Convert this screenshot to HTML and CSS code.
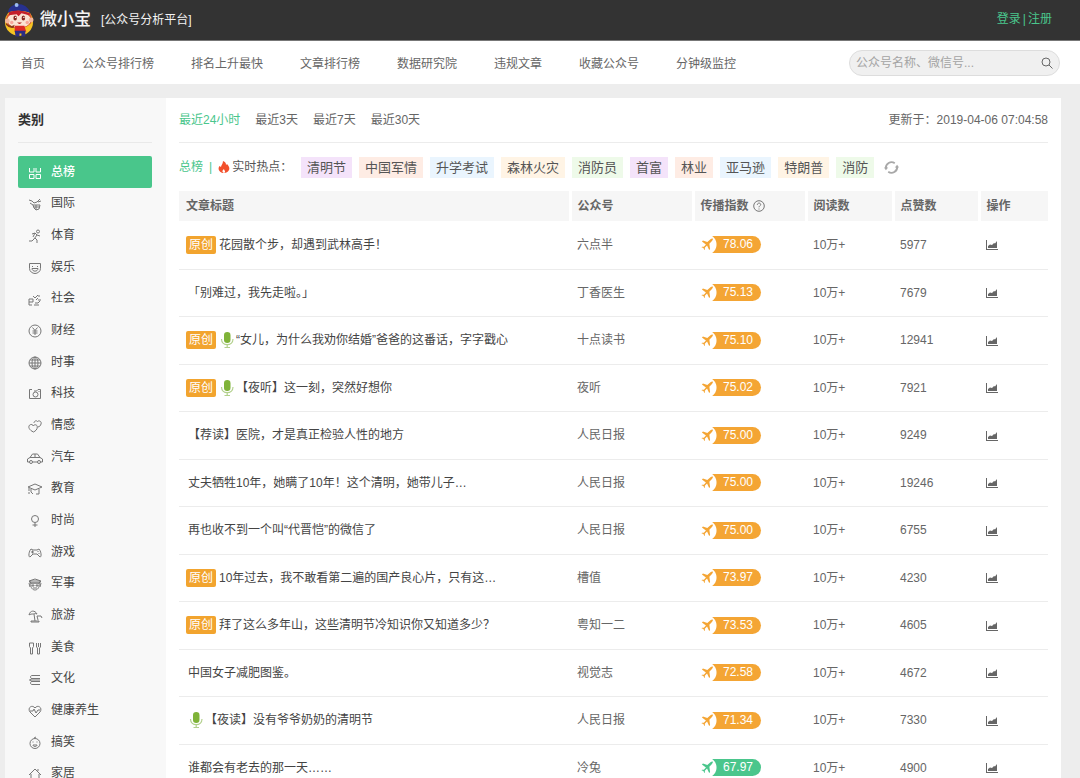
FILE: index.html
```html
<!DOCTYPE html>
<html lang="zh-CN">
<head>
<meta charset="utf-8">
<title>微小宝 公众号分析平台</title>
<link rel="stylesheet" href="styles.css">
</head>
<body>
<svg class="sprite" aria-hidden="true">
  <symbol id="i-all" viewBox="0 0 16 16"><path d="M2.500 3v4h4.500V3M9 3v4h4.500V3M2.500 9.500h4.500V13.500H2.500zM9 9.500h4.500V13.500H9z"/></symbol>
  <symbol id="i-world" viewBox="0 0 16 16"><path d="M2 4l3 1 2 2 3-1 3-3M3 7l3 2M11 6l3-1M6 9h7l-1 4-3 1-2-2zM9 9v5M7 11h6"/></symbol>
  <symbol id="i-sport" viewBox="0 0 16 16"><circle cx="11" cy="3.500" r="1.500"/><path d="M5 6l3-1 2 2-3 4-2 2H2M10 7l3 1M8 10l2 2v3M8 5l-2 4"/></symbol>
  <symbol id="i-fun" viewBox="0 0 16 16"><path d="M2.500 3.500h11v5c0 3-3 5-5.500 5s-5.500-2-5.500-5zM5 6.500h1M10 6.500h1"/><path class="solid" d="M5 8.500h6c0 3.500-6 3.500-6 0z"/></symbol>
  <symbol id="i-social" viewBox="0 0 16 16"><path d="M2 8h4v3H2zM2 11v3h3M6 5l2 2 3-3M11 7l-2 2M8 12h3l2-2M12 4v2M7 14h5M11 9h3"/></symbol>
  <symbol id="i-money" viewBox="0 0 16 16"><circle cx="8" cy="8" r="6"/><path d="M5.500 4.500L8 7.500l2.500-3M5.500 8h5M5.500 10h5M8 7.500V12"/></symbol>
  <symbol id="i-globe" viewBox="0 0 16 16"><circle cx="8" cy="8" r="6"/><ellipse cx="8" cy="8" rx="3" ry="6"/><path d="M2 8h12M8 2v12M3 5h10M3 11h10"/></symbol>
  <symbol id="i-cam" viewBox="0 0 16 16"><path d="M5 3.500H2.500v9h11v-9H11L9.500 5H7"/><circle cx="8.500" cy="8.500" r="2.500"/><path d="M12 5v1"/></symbol>
  <symbol id="i-heart" viewBox="0 0 16 16"><path d="M6.500 14C2 12 1 9 2.500 7.200 4 5.800 6 6.500 6.300 8c1-2 4-1.500 4 1C10.300 11.500 8.500 13 6.500 14zM7 5c0-2 2.500-3 3.500-1.500C12 2 15 3.500 14 6c-.5 2-1.500 2.500-3 3"/></symbol>
  <symbol id="i-car" viewBox="0 0 16 16"><path d="M2.500 12H.5V9l2.500-1.500L5.500 4h5L13 7.500 15.500 9v3h-2M5.500 12h5M3 7.500h10M8 4v3.500"/><circle cx="4" cy="12" r="1.500"/><circle cx="12" cy="12" r="1.500"/></symbol>
  <symbol id="i-edu" viewBox="0 0 16 16"><path d="M1 6l7-3 7 3-7 3zM4 8v3M12 8v5H9M4 11l2 2M2 7v3M1 12h2"/></symbol>
  <symbol id="i-style" viewBox="0 0 16 16"><circle cx="8" cy="6" r="3.500"/><path d="M8 9.500V14M5.500 12h5"/></symbol>
  <symbol id="i-game" viewBox="0 0 16 16"><path d="M4 4l2 1h4l2-1c2 2 3 8 1 8l-3-3H6l-3 3C1 12 2 6 4 4zM4 7h3M5.500 5.500v3M11 6v1M12 8v1"/></symbol>
  <symbol id="i-army" viewBox="0 0 16 16"><path d="M2 5l6-2 6 2-2 2H4zM4 7c-1 5 2 7 4 7s5-2 4-7M2 7l1 4M14 7l-1 4M6 12h4"/><path class="solid" d="M3 5h10v2H3zM5 9h2v1H5zM9 9h2v1H9z"/></symbol>
  <symbol id="i-trip" viewBox="0 0 16 16"><path d="M2 7c1-5 6-5 8-1-2-1-3 0-4 0S3 6 2 7zM7 6l1 7M10 8h4l1 2M10 8l1 4"/><path class="solid" d="M4 13h8v1H4z"/></symbol>
  <symbol id="i-food" viewBox="0 0 16 16"><path d="M2.500 3h4v3.500L5.500 8v6h-2V8l-1-1.500zM9.500 3v4l1 1v6h2V8l1-1V3M11.500 3v4"/></symbol>
  <symbol id="i-book" viewBox="0 0 16 16"><path d="M13 4.500H5c-2 0-2 3 0 3h8M5 7.500c-2 0-2 3 0 3h8M5 10.500c-2 0-2 3 0 3h8M2 9h11"/></symbol>
  <symbol id="i-health" viewBox="0 0 16 16"><path d="M8 14L3 9C0 5 5 1 8 5c3-4 8 0 5 4zM3 8h3l1-2 2 4 2-3h2"/></symbol>
  <symbol id="i-laugh" viewBox="0 0 16 16"><circle cx="8" cy="8.500" r="5"/><path d="M5.500 7h1M9.500 7h1M6 10h4c0 2-4 2-4 0zM7 3l2-1"/></symbol>
  <symbol id="i-home" viewBox="0 0 16 16"><path d="M2 9l6-6 6 6M4 8v6h8V8M11 5V3"/></symbol>
  <symbol id="plane" viewBox="0 0 14 14"><path d="M1 3.700l1.100-.9 4.700 1.400 3.400-2.900c1.200-.9 2.300-.8 2.500-.5.300.4 0 1.400-.9 2.400L9 6.300l.8 5.500-1 1-2.300-4.600-2.400 2.200.1 2-.6.600-1-2.100-2.100-1 .6-.6 2 .1 2.200-2.400z"/></symbol>
  <symbol id="chart" viewBox="0 0 12 11"><path d="M0 1h1v9h11v1H0z"/><path d="M2 9V7l2-1.500 2 .5 2-2 1 .5L11 2v7z"/></symbol>
  <symbol id="mic" viewBox="0 0 14 18"><rect x="4" y="1" width="6.500" height="11" rx="3.200" fill="#7fb338"/><path d="M1.500 8c0 7.500 11.500 7.500 11.500 0M7.200 14v2.500M4.500 16.500h5.500" fill="none" stroke="#b2d08c" stroke-width="1.200"/></symbol>
</svg>

<header class="topbar">
  <a class="brand" href="#">
    <svg class="mascot" viewBox="0 0 32 36" aria-hidden="true">
      <circle cx="15.500" cy="20" r="14.500" fill="#f6c322"/>
      <path d="M4 12Q1 16 3 22q5 5 12 4 8 1 13-5 2-5-1-10z" fill="#d9582f"/>
      <ellipse cx="15.500" cy="18" rx="12" ry="8" fill="#fbe3d3"/>
      <circle cx="3.500" cy="19" r="2.500" fill="#f3b59b"/><circle cx="28" cy="18" r="2.500" fill="#f3b59b"/>
      <path d="M4 10Q5 3 14 1.500q10 0 13 9-11-4-23-.5z" fill="#27318f"/>
      <path d="M5 10q10-4 22 1l-1 2-8-2-3 3-2-2-8 1z" fill="#c51f2b"/>
      <circle cx="13" cy="2.500" r="2" fill="#9cbcf0"/>
      <ellipse cx="11.500" cy="16" rx="1.800" ry="2.600" fill="#8b2820"/><ellipse cx="20" cy="16" rx="1.800" ry="2.600" fill="#8b2820"/>
      <circle cx="12" cy="15.300" r=".7" fill="#fff"/><circle cx="20.500" cy="15.300" r=".7" fill="#fff"/>
      <circle cx="8" cy="20.500" r="1.800" fill="#f7a79b"/><circle cx="24" cy="20.500" r="1.800" fill="#f7a79b"/>
      <path d="M13.500 20.500h5q-2.500 3-5 0z" fill="#b01d1d"/>
      <path d="M2 21q5 5 9 2l-1 3Q5 27 2 23z" fill="#8a3a16"/>
      <path d="M11 24h10l2 6H11z" fill="#dc2a25"/>
      <path d="M11 29h11v6h-4v-3h-2v3h-4z" fill="#2b2d83"/>
    </svg>
    <span class="brand-name">微小宝</span>
    <span class="brand-sub">[公众号分析平台]</span>
  </a>
  <div class="account"><a href="#">登录</a><span>|</span><a href="#">注册</a></div>
</header>

<nav class="mainnav">
  <div class="links">
    <a href="#">首页</a><a href="#">公众号排行榜</a><a href="#">排名上升最快</a><a href="#">文章排行榜</a><a href="#">数据研究院</a><a href="#">违规文章</a><a href="#">收藏公众号</a><a href="#">分钟级监控</a>
  </div>
  <form class="search">
    <input type="text" placeholder="公众号名称、微信号..." aria-label="搜索公众号">
    <button type="button" aria-label="搜索"><svg viewBox="0 0 12 12"><circle cx="5" cy="5" r="4"/><path d="M8 8l3.500 3.500"/></svg></button>
  </form>
</nav>

<div class="page">
  <aside class="sidebar">
    <h2>类别</h2>
    <div class="cats">
      <a class="active" href="#"><svg><use href="#i-all"/></svg>总榜</a>
      <a href="#"><svg><use href="#i-world"/></svg>国际</a>
      <a href="#"><svg><use href="#i-sport"/></svg>体育</a>
      <a href="#"><svg><use href="#i-fun"/></svg>娱乐</a>
      <a href="#"><svg><use href="#i-social"/></svg>社会</a>
      <a href="#"><svg><use href="#i-money"/></svg>财经</a>
      <a href="#"><svg><use href="#i-globe"/></svg>时事</a>
      <a href="#"><svg><use href="#i-cam"/></svg>科技</a>
      <a href="#"><svg><use href="#i-heart"/></svg>情感</a>
      <a href="#"><svg><use href="#i-car"/></svg>汽车</a>
      <a href="#"><svg><use href="#i-edu"/></svg>教育</a>
      <a href="#"><svg><use href="#i-style"/></svg>时尚</a>
      <a href="#"><svg><use href="#i-game"/></svg>游戏</a>
      <a href="#"><svg><use href="#i-army"/></svg>军事</a>
      <a href="#"><svg><use href="#i-trip"/></svg>旅游</a>
      <a href="#"><svg><use href="#i-food"/></svg>美食</a>
      <a href="#"><svg><use href="#i-book"/></svg>文化</a>
      <a href="#"><svg><use href="#i-health"/></svg>健康养生</a>
      <a href="#"><svg><use href="#i-laugh"/></svg>搞笑</a>
      <a href="#"><svg><use href="#i-home"/></svg>家居</a>
    </div>
  </aside>

  <main class="content">
    <div class="periods">
      <a class="on" href="#">最近24小时</a><a href="#">最近3天</a><a href="#">最近7天</a><a href="#">最近30天</a>
      <span class="updated">更新于：2019-04-06 07:04:58</span>
    </div>
    <div class="hot">
      <div class="hot-label">
        <span class="green">总榜</span><span class="green bar">|</span>
        <svg class="flame" viewBox="0 0 12 12"><path d="M5 0c3 1 3 3 3 4l1-1c5 5 1 9-3 9S-1 8 1.500 5L3 6c0-2 2-3 2-6z" fill="#f2502c"/><path d="M6 12c-2.500-1-1.500-3 0-4 0 1.500 2.500 2.500 0 4z" fill="#fff"/></svg>
        <span>实时热点：</span>
      </div>
      <a class="tag violet" href="#">清明节</a><a class="tag pink" href="#">中国军情</a><a class="tag blue" href="#">升学考试</a><a class="tag cream" href="#">森林火灾</a><a class="tag lime" href="#">消防员</a><a class="tag violet" href="#">首富</a><a class="tag pink" href="#">林业</a><a class="tag blue" href="#">亚马逊</a><a class="tag cream" href="#">特朗普</a><a class="tag lime" href="#">消防</a>
      <button class="refresh" type="button" aria-label="刷新"><svg viewBox="0 0 16 16"><path d="M2 9a6 6 0 0 1 9.500-5.500M14 7a6 6 0 0 1-9.500 5.500"/><path class="tip" d="M0 8l2 3L4.500 8zM16 8l-2-3-2.500 3z"/></svg></button>
    </div>

    <table class="rank">
      <colgroup><col><col class="c-name"><col class="c-index"><col class="c-read"><col class="c-like"><col class="c-op"></colgroup>
      <thead>
        <tr><th>文章标题</th><th>公众号</th><th><span class="with-help">传播指数<svg viewBox="0 0 12 12"><circle cx="6" cy="6" r="5.300"/><path d="M4.300 4.800C4.300 2.500 7.800 2.600 7.700 4.700 7.600 5.800 6 5.900 6 7.300M6 8.500v1"/></svg></span></th><th>阅读数</th><th>点赞数</th><th>操作</th></tr>
      </thead>
      <tbody>
        <tr><td><a class="title" href="#"><b>原创</b>花园散个步，却遇到武林高手！</a></td><td>六点半</td><td><span class="score"><svg><use href="#plane"/></svg><i>78.06</i></span></td><td>10万+</td><td>5977</td><td><a class="op" href="#" aria-label="趋势"><svg><use href="#chart"/></svg></a></td></tr>
        <tr><td><a class="title" href="#">「别难过，我先走啦。」</a></td><td>丁香医生</td><td><span class="score"><svg><use href="#plane"/></svg><i>75.13</i></span></td><td>10万+</td><td>7679</td><td><a class="op" href="#" aria-label="趋势"><svg><use href="#chart"/></svg></a></td></tr>
        <tr><td><a class="title" href="#"><b>原创</b><svg class="mic"><use href="#mic"/></svg>“女儿，为什么我劝你结婚”爸爸的这番话，字字戳心</a></td><td>十点读书</td><td><span class="score"><svg><use href="#plane"/></svg><i>75.10</i></span></td><td>10万+</td><td>12941</td><td><a class="op" href="#" aria-label="趋势"><svg><use href="#chart"/></svg></a></td></tr>
        <tr><td><a class="title" href="#"><b>原创</b><svg class="mic"><use href="#mic"/></svg>【夜听】这一刻，突然好想你</a></td><td>夜听</td><td><span class="score"><svg><use href="#plane"/></svg><i>75.02</i></span></td><td>10万+</td><td>7921</td><td><a class="op" href="#" aria-label="趋势"><svg><use href="#chart"/></svg></a></td></tr>
        <tr><td><a class="title" href="#">【荐读】医院，才是真正检验人性的地方</a></td><td>人民日报</td><td><span class="score"><svg><use href="#plane"/></svg><i>75.00</i></span></td><td>10万+</td><td>9249</td><td><a class="op" href="#" aria-label="趋势"><svg><use href="#chart"/></svg></a></td></tr>
        <tr><td><a class="title" href="#">丈夫牺牲10年，她瞒了10年！这个清明，她带儿子…</a></td><td>人民日报</td><td><span class="score"><svg><use href="#plane"/></svg><i>75.00</i></span></td><td>10万+</td><td>19246</td><td><a class="op" href="#" aria-label="趋势"><svg><use href="#chart"/></svg></a></td></tr>
        <tr><td><a class="title" href="#">再也收不到一个叫“代晋恺”的微信了</a></td><td>人民日报</td><td><span class="score"><svg><use href="#plane"/></svg><i>75.00</i></span></td><td>10万+</td><td>6755</td><td><a class="op" href="#" aria-label="趋势"><svg><use href="#chart"/></svg></a></td></tr>
        <tr><td><a class="title" href="#"><b>原创</b>10年过去，我不敢看第二遍的国产良心片，只有这…</a></td><td>槽值</td><td><span class="score"><svg><use href="#plane"/></svg><i>73.97</i></span></td><td>10万+</td><td>4230</td><td><a class="op" href="#" aria-label="趋势"><svg><use href="#chart"/></svg></a></td></tr>
        <tr><td><a class="title" href="#"><b>原创</b>拜了这么多年山，这些清明节冷知识你又知道多少？</a></td><td>粤知一二</td><td><span class="score"><svg><use href="#plane"/></svg><i>73.53</i></span></td><td>10万+</td><td>4605</td><td><a class="op" href="#" aria-label="趋势"><svg><use href="#chart"/></svg></a></td></tr>
        <tr><td><a class="title" href="#">中国女子减肥图鉴。</a></td><td>视觉志</td><td><span class="score"><svg><use href="#plane"/></svg><i>72.58</i></span></td><td>10万+</td><td>4672</td><td><a class="op" href="#" aria-label="趋势"><svg><use href="#chart"/></svg></a></td></tr>
        <tr><td><a class="title" href="#"><svg class="mic"><use href="#mic"/></svg>【夜读】没有爷爷奶奶的清明节</a></td><td>人民日报</td><td><span class="score"><svg><use href="#plane"/></svg><i>71.34</i></span></td><td>10万+</td><td>7330</td><td><a class="op" href="#" aria-label="趋势"><svg><use href="#chart"/></svg></a></td></tr>
        <tr><td><a class="title" href="#">谁都会有老去的那一天……</a></td><td>冷兔</td><td><span class="score low"><svg><use href="#plane"/></svg><i>67.97</i></span></td><td>10万+</td><td>4900</td><td><a class="op" href="#" aria-label="趋势"><svg><use href="#chart"/></svg></a></td></tr>
      </tbody>
    </table>
  </main>
</div>
</body>
</html>
```
FILE: styles.css
```css
* { box-sizing: border-box; }
body {
  margin: 0;
  background: #ededed;
  color: #666;
  font: 12px/20px "Liberation Sans", "Noto Sans CJK SC", sans-serif;
}
a { color: inherit; text-decoration: none; }
button { padding: 0; border: 0; background: none; cursor: pointer; }
svg { flex: none; display: block; }
.sprite { display: none; }

.topbar {
  display: flex;
  align-items: center;
  justify-content: space-between;
  height: 41px;
  padding: 0 28px 0 4px;
  background: #333;
  border-bottom: 1px solid #777;
}
.brand { display: flex; align-items: center; color: #f4f4f4; }
.mascot { width: 31px; height: 36px; }
.brand-name { margin-left: 5px; font-size: 17px; font-weight: 500; }
.brand-sub { margin-left: 10px; }
.account { display: flex; gap: 2px; padding-bottom: 2px; color: #4ac68c; }

.mainnav {
  display: flex;
  align-items: center;
  justify-content: space-between;
  height: 43px;
  padding: 0 20px 0 21px;
  background: #fff;
}
.links { display: flex; gap: 37px; padding-top: 2px; white-space: nowrap; }
.search {
  display: flex;
  align-items: center;
  width: 211px;
  height: 26px;
  padding: 0 6px;
  border: 1px solid #ddd;
  border-radius: 13px;
  background: #f0f0f0;
}
.search input {
  flex: 1;
  min-width: 0;
  padding: 0;
  border: 0;
  outline: 0;
  background: none;
  color: #666;
  font: inherit;
}
.search input::placeholder { color: #a4a4a4; }
.search svg { width: 12px; height: 12px; fill: none; stroke: #666; }

.page { display: flex; margin: 14px 19px 0 5px; }
.sidebar { flex: none; width: 161px; padding: 0 14px 20px 13px; background: #f8f8f8; }
.sidebar h2 {
  margin: 0 0 13px;
  height: 45px;
  border-bottom: 1px solid #e9e9e9;
  color: #333;
  font-size: 13px;
  line-height: 43px;
}
.cats { display: grid; grid-auto-rows: 1fr; min-height: 633px; }
.cats a {
  display: flex;
  align-items: center;
  gap: 8px;
  padding-left: 9px;
  border-radius: 2px;
  color: #444;
}
.cats svg {
  width: 16px;
  height: 16px;
  margin-top: 2px;
  fill: none;
  stroke: #777;
}
.cats .solid { fill: #444; }
.cats .active { background: #49c68b; color: #fff; font-weight: 500; }
.cats .active svg { stroke: #fff; }

.content { flex: 1; min-width: 0; padding: 0 13px 20px; background: #fff; }
.periods {
  display: flex;
  align-items: center;
  gap: 15px;
  height: 45px;
  border-bottom: 1px solid #ececec;
}
.periods .on, .green { color: #4ac68c; }
.updated { margin-left: auto; }

.hot { display: flex; align-items: center; gap: 7px; height: 48px; white-space: nowrap; }
.hot-label { display: flex; align-items: center; width: 115px; color: #555; }
.bar { margin: 0 6px; }
.flame { width: 12px; height: 12px; margin-right: 2px; }
.tag { padding: 0 6px; color: #555; font-size: 13px; line-height: 21px; }
.violet { background: #f4e3fa; }
.pink { background: #feece4; }
.blue { background: #eaf5fe; }
.cream { background: #fff4e5; }
.lime { background: #eefae9; }
.refresh { margin-left: 3px; }
.refresh svg { width: 15px; height: 15px; fill: none; stroke: #a8a8a8; stroke-width: 2; }
.refresh .tip { fill: #a8a8a8; stroke: none; }

.rank { width: 100%; border-collapse: collapse; table-layout: fixed; }
.c-name { width: 123px; }
.c-index { width: 113px; }
.c-read { width: 87px; }
.c-like { width: 86px; }
.c-op { width: 69px; }
.rank th {
  height: 30px;
  padding: 0 6px;
  border-right: 3px solid #fff;
  background: #f6f6f6;
  background-clip: padding-box;
  text-align: left;
}
.rank th:first-child { padding-left: 7px; }
.rank th:last-child { border-right: 0; }
.with-help { display: flex; align-items: center; gap: 4px; }
.with-help svg { width: 12px; height: 12px; fill: none; stroke: #777; }
.rank td { height: 48px; padding: 0 7px; border-bottom: 1px solid #ececec; }
.rank tbody tr:nth-child(even) td { height: 47px; }
.title { display: flex; align-items: center; padding-left: 2px; color: #444; white-space: nowrap; }
.title b {
  margin: 0 3px 0 -2px;
  padding: 0 3px;
  border-radius: 2px;
  background: #f2a42e;
  color: #fff;
  font-weight: 400;
  line-height: 18px;
}
.title .mic { width: 14px; height: 18px; margin: 0 2px 0 1px; }
.score { display: flex; align-items: center; width: 60px; margin-left: 1px; color: #f4a534; }
.score svg { z-index: 1; width: 13px; height: 13px; margin-right: -2px; fill: currentColor; }
.score i {
  flex: 1;
  padding-left: 11px;
  border-radius: 0 9px 9px 0;
  background: radial-gradient(circle at -6px 50%, #fff 10px, currentColor 11px);
  font-style: normal;
  line-height: 17px;
}
.score i::first-line { color: #fff; }
.low { color: #4ac68c; }
.op svg { width: 12px; height: 11px; fill: #666; }
```
